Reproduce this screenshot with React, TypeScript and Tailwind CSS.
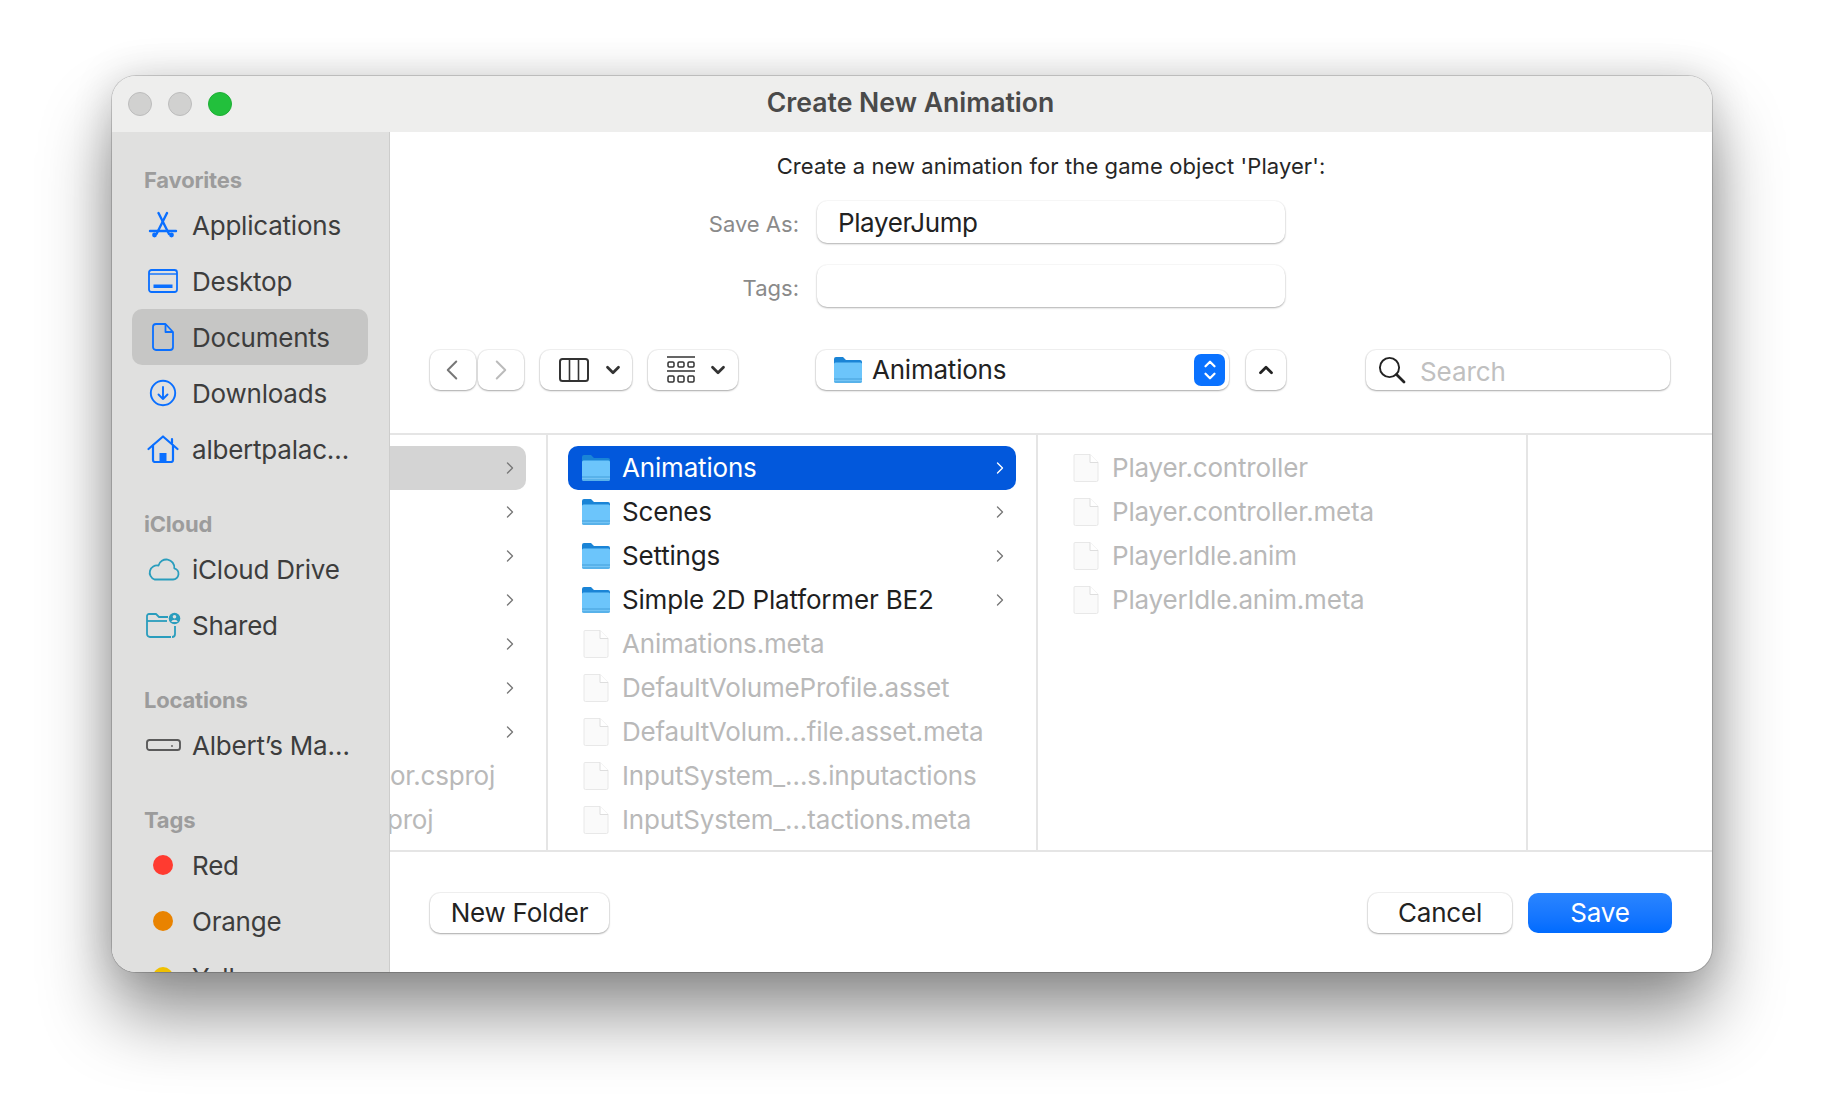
import React from 'react';
import { ChevronLeft, ChevronRight, ChevronDown, ChevronUp } from 'lucide-react';

const BLUE = '#0a6fff';
const TEAL = '#2a9dbd';

const AppsIcon = () => (
  <svg width="30" height="28" viewBox="0 0 30 28" fill="none" stroke={BLUE} strokeWidth="2.4" strokeLinecap="round">
    <path d="M10.5 2 L21 23" />
    <path d="M19 2 L8.5 23" />
    <path d="M2 20 H28" />
    <circle cx="6.5" cy="24" r="1.2" fill={BLUE} />
    <circle cx="23.5" cy="24" r="1.2" fill={BLUE} />
  </svg>
);

const DesktopIcon = () => (
  <svg width="30" height="24" viewBox="0 0 30 24" fill="none" stroke={BLUE} strokeWidth="1.8">
    <rect x="1" y="1" width="28" height="22" rx="2.5" />
    <path d="M1 5 H29" strokeWidth="1.4" />
    <rect x="5.5" y="15.5" width="19" height="3.5" fill={BLUE} stroke="none" />
  </svg>
);

const DocIcon = () => (
  <svg width="22" height="28" viewBox="0 0 22 28" fill="none" stroke={BLUE} strokeWidth="1.8" strokeLinejoin="round">
    <path d="M4 1 H13.5 L21 9 V24 A3 3 0 0 1 18 27 H4 A3 3 0 0 1 1 24 V4 A3 3 0 0 1 4 1 Z" />
    <path d="M13.5 1 V9 H21" />
  </svg>
);

const DownloadIcon = () => (
  <svg width="28" height="28" viewBox="0 0 28 28" fill="none" stroke={BLUE} strokeWidth="1.9" strokeLinecap="round" strokeLinejoin="round">
    <circle cx="14" cy="14" r="12.2" />
    <path d="M14 8 V20 M9.5 15.5 L14 20 L18.5 15.5" />
  </svg>
);

const HomeIcon = () => (
  <svg width="32" height="28" viewBox="0 0 32 28" fill="none" stroke={BLUE} strokeWidth="2.2" strokeLinecap="round" strokeLinejoin="round">
    <path d="M1.5 14 L16 1.5 L30.5 14" />
    <path d="M6 10.5 V25 A2 2 0 0 0 8 27 H24 A2 2 0 0 0 26 25 V10.5" />
    <path d="M25 4 V8" />
    <rect x="12.5" y="18" width="7" height="9" fill={BLUE} stroke="none" />
  </svg>
);

const CloudIcon = () => (
  <svg width="33" height="24" viewBox="0 0 33 24" fill="none" stroke={TEAL} strokeWidth="1.8" strokeLinejoin="round">
    <path d="M7.5 22.5 H26 A5.7 5.7 0 0 0 27.3 11.3 A8.05 8.05 0 0 0 11.5 8.5 A7.3 7.3 0 0 0 7.5 22.5 Z" />
  </svg>
);

const SharedIcon = () => (
  <svg width="35" height="26" viewBox="0 0 35 26" fill="none" stroke={TEAL} strokeWidth="1.8" strokeLinejoin="round">
    <path d="M25 25 H4 A3 3 0 0 1 1 22 V4 A2 2 0 0 1 3 2 H10 L13 5 H22" />
    <path d="M1 9 H21" />
    <path d="M29 14 V22 A3 3 0 0 1 26 25" />
    <circle cx="28.5" cy="6.5" r="5.8" fill={TEAL} stroke="none" />
    <circle cx="28.5" cy="4.8" r="1.8" fill="#e0e0df" stroke="none" />
    <path d="M25.2 10 A3.4 3 0 0 1 31.8 10 Z" fill="#e0e0df" stroke="none" />
  </svg>
);

const DriveIcon = () => (
  <svg width="35" height="14" viewBox="0 0 35 14" fill="none" stroke="#5b5b5b" strokeWidth="1.9">
    <rect x="1" y="2" width="33" height="10" rx="2.6" />
    <circle cx="26" cy="8" r="0.9" fill="#5b5b5b" stroke="none" />
  </svg>
);

const FolderIcon = () => (
  <svg width="30" height="28" viewBox="0 0 30 28" className="shrink-0">
    <path d="M1 3 A2 2 0 0 1 3 1 H10 L13 4 H27 A2 2 0 0 1 29 6 V14 H1 Z" fill="#1a84d6" />
    <path d="M1 8 A1.5 1.5 0 0 1 2.5 6.5 H27.5 A1.5 1.5 0 0 1 29 8 V25 A2 2 0 0 1 27 27 H3 A2 2 0 0 1 1 25 Z" fill="#6cc5fb" />
    <path d="M1 22 H29 V25 A2 2 0 0 1 27 27 H3 A2 2 0 0 1 1 25 Z" fill="#58b2ea" />
    <path d="M1 24.5 H29" stroke="#7cc9f6" strokeWidth="0.8" />
  </svg>
);

const FileIcon = () => (
  <svg width="28" height="30" viewBox="0 0 28 30" className="shrink-0">
    <path d="M3 1.5 H18 L26 9.5 V27 A1.5 1.5 0 0 1 24.5 28.5 H3.5 A1.5 1.5 0 0 1 2 27 V2.5 A1 1 0 0 1 3 1.5 Z" fill="#fafafa" stroke="#e8e8e8" strokeWidth="1" />
    <path d="M18 1.5 V9.5 H26" fill="#ffffff" stroke="#dedede" strokeWidth="1" />
  </svg>
);

const ColumnsIcon = () => (
  <svg width="30" height="24" viewBox="0 0 30 24" fill="none" stroke="#333" strokeWidth="2">
    <rect x="1" y="1" width="28" height="22" rx="2.5" />
    <path d="M10.5 1 V23 M19.5 1 V23" strokeWidth="1.6" />
  </svg>
);

const GroupIcon = () => (
  <svg width="28" height="28" viewBox="0 0 28 28" fill="none" stroke="#333" strokeWidth="1.5">
    <path d="M0 1 H28 M0 15 H28" />
    <rect x="1" y="6" width="6" height="5" rx="1.2" />
    <rect x="11" y="6" width="6" height="5" rx="1.2" />
    <rect x="21" y="6" width="6" height="5" rx="1.2" />
    <rect x="1" y="20" width="6" height="6" rx="1.2" />
    <rect x="11" y="20" width="6" height="6" rx="1.2" />
    <rect x="21" y="20" width="6" height="6" rx="1.2" />
  </svg>
);

const SearchIcon = () => (
  <svg width="28" height="28" viewBox="0 0 28 28" fill="none" stroke="#222" className="shrink-0">
    <circle cx="11.5" cy="11.5" r="9.6" strokeWidth="1.9" />
    <path d="M18.5 18.5 L26 26" strokeWidth="2.8" strokeLinecap="round" />
  </svg>
);

const Label: React.FC<{ children: React.ReactNode; first?: boolean }> = ({ children, first }) => (
  <div className={`h-[28px] leading-[28px] pl-[32px] mb-[3px] text-[22px] font-bold tracking-[-0.2px] text-[#9c9c9c] ${first ? '' : 'mt-[33px]'}`}>
    {children}
  </div>
);

const SideItem: React.FC<{ icon: React.ReactNode; text: string; active?: boolean }> = ({ icon, text, active }) => (
  <div className={`ml-[20px] w-[236px] h-[56px] shrink-0 flex items-center pl-[13px] rounded-[10px] ${active ? 'bg-[#c6c6c5]' : ''}`}>
    <div className="w-[36px] flex justify-center shrink-0">{icon}</div>
    <span className="ml-[11px] text-[26px] tracking-[-0.22px] text-[#3d3d3d] whitespace-nowrap">{text}</span>
  </div>
);

const Dot: React.FC<{ color: string }> = ({ color }) => <div className={`w-[20px] h-[20px] rounded-full ${color}`} />;

const Row: React.FC<{ name?: string; folder?: boolean; selected?: boolean }> = ({ name, folder, selected }) => (
  <div className={`h-[44px] shrink-0 w-[448px] ml-[20px] flex items-center pr-[6px] rounded-[10px] ${folder ? 'pl-[13px]' : 'pl-[14px]'} ${selected ? 'bg-[#0258dc]' : ''}`}>
    {folder ? <FolderIcon /> : <FileIcon />}
    <span className={`pb-[2px] text-[26px] tracking-[-0.18px] whitespace-nowrap ${folder ? 'ml-[11px]' : 'ml-[12px]'} ${selected ? 'text-white' : folder ? 'text-[#1f1f1f]' : 'text-[#b9b9b9]'}`}>{name}</span>
    {folder && <ChevronRight size={20} strokeWidth={1.6} className={`ml-auto ${selected ? 'text-white' : 'text-[#777]'}`} />}
  </div>
);

const btn = 'bg-white rounded-[10px] shadow-[0_0_0_1px_rgba(0,0,0,0.05),0_1px_2px_rgba(0,0,0,0.3)]';
const field = 'bg-white rounded-[10px] shadow-[0_0_0_1px_rgba(0,0,0,0.02),0_1px_2px_rgba(0,0,0,0.3)]';

export default function App() {
  const col2 = [
    { name: 'Animations', folder: true, selected: true },
    { name: 'Scenes', folder: true },
    { name: 'Settings', folder: true },
    { name: 'Simple 2D Platformer BE2', folder: true },
    { name: 'Animations.meta' },
    { name: 'DefaultVolumeProfile.asset' },
    { name: 'DefaultVolum…file.asset.meta' },
    { name: 'InputSystem_…s.inputactions' },
    { name: 'InputSystem_…tactions.meta' },
    {},
  ];
  const col3 = ['Player.controller', 'Player.controller.meta', 'PlayerIdle.anim', 'PlayerIdle.anim.meta'];

  return (
    <div className="w-[1824px] h-[1120px] bg-white pt-[76px] pl-[112px] overflow-hidden font-['Inter',sans-serif]">
      <div className="w-[1600px] h-[896px] rounded-[24px] overflow-hidden flex flex-col bg-white shadow-[0_0_0_1px_rgba(0,0,0,0.16),0_44px_70px_rgba(0,0,0,0.42),0_0_40px_rgba(0,0,0,0.16)]">
        {/* title bar */}
        <div className="h-[56px] shrink-0 bg-[#eeeeed] flex items-center relative">
          <div className="flex gap-[16px] pl-[16px]">
            <div className="w-[24px] h-[24px] rounded-full bg-[#d1d1d0] border border-[#bcbcbc]" />
            <div className="w-[24px] h-[24px] rounded-full bg-[#d1d1d0] border border-[#bcbcbc]" />
            <div className="w-[24px] h-[24px] rounded-full bg-[#22c03c] border border-[#1eae35]" />
          </div>
          <div className="absolute inset-0 flex items-center justify-center pb-[2px] pr-[3px] text-[26.6px] font-semibold text-[#4a4a4a]">Create New Animation</div>
        </div>

        <div className="flex flex-1 min-h-0">
          {/* sidebar */}
          <div className="w-[278px] shrink-0 bg-[#e0e0df] border-r border-[#cdcdcc] pt-[34px] overflow-hidden flex flex-col">
            <Label first>Favorites</Label>
            <SideItem icon={<AppsIcon />} text="Applications" />
            <SideItem icon={<DesktopIcon />} text="Desktop" />
            <SideItem icon={<DocIcon />} text="Documents" active />
            <SideItem icon={<DownloadIcon />} text="Downloads" />
            <SideItem icon={<HomeIcon />} text="albertpalac…" />
            <Label>iCloud</Label>
            <SideItem icon={<CloudIcon />} text="iCloud Drive" />
            <SideItem icon={<SharedIcon />} text="Shared" />
            <Label>Locations</Label>
            <SideItem icon={<DriveIcon />} text="Albert’s Ma…" />
            <Label>Tags</Label>
            <SideItem icon={<Dot color="bg-[#ff3b30]" />} text="Red" />
            <SideItem icon={<Dot color="bg-[#e98300]" />} text="Orange" />
            <SideItem icon={<Dot color="bg-[#f0c000]" />} text="Yellow" />
          </div>

          {/* main */}
          <div className="flex-1 min-w-0 flex flex-col">
            <div className="h-[303px] shrink-0 border-b-2 border-[#e5e5e5]">
              <div className="mt-[20px] h-[28px] leading-[28px] text-center text-[22px] tracking-[0.09px] text-[#262626]">
                Create a new animation for the game object 'Player':
              </div>
              <div className="mt-[21px] flex items-center h-[42px]">
                <div className="w-[409px] pt-[5px] text-right text-[22px] text-[#8a8a8a]">Save As:</div>
                <div className={`ml-[18px] w-[468px] h-[42px] flex items-center pl-[21px] text-[26px] tracking-[-0.4px] text-[#222] ${field}`}>PlayerJump</div>
              </div>
              <div className="mt-[22px] flex items-center h-[42px]">
                <div className="w-[409px] pt-[5px] text-right text-[22px] text-[#8a8a8a]">Tags:</div>
                <div className={`ml-[18px] w-[468px] h-[42px] ${field}`} />
              </div>
              <div className="mt-[43px] flex h-[40px] pl-[40px]">
                <div className={`w-[46px] flex items-center justify-center ${btn}`}>
                  <ChevronLeft size={34} strokeWidth={1.4} className="text-[#777] -ml-[3px]" />
                </div>
                <div className={`w-[46px] ml-[2px] flex items-center justify-center ${btn}`}>
                  <ChevronRight size={34} strokeWidth={1.4} className="text-[#bbb]" />
                </div>
                <div className={`w-[92px] ml-[16px] flex items-center pl-[19px] ${btn}`}>
                  <ColumnsIcon />
                  <ChevronDown size={22} strokeWidth={3} className="ml-[13px] text-[#333]" />
                </div>
                <div className={`w-[90px] ml-[16px] flex items-center pl-[19px] ${btn}`}>
                  <GroupIcon />
                  <ChevronDown size={22} strokeWidth={3} className="ml-[12px] text-[#333]" />
                </div>
                <div className={`w-[413px] ml-[78px] flex items-center pl-[17px] pr-[4px] ${btn}`}>
                  <FolderIcon />
                  <span className="ml-[9px] pb-[2px] text-[26px] tracking-[-0.22px] text-[#222]">Animations</span>
                  <div className="ml-auto w-[31px] h-[32px] rounded-[7px] bg-[#0a72ff] flex flex-col items-center justify-center text-white">
                    <ChevronUp size={18} strokeWidth={3} className="-mb-[3px]" />
                    <ChevronDown size={18} strokeWidth={3} className="-mt-[3px]" />
                  </div>
                </div>
                <div className={`w-[40px] ml-[17px] flex items-center justify-center ${btn}`}>
                  <ChevronUp size={22} strokeWidth={3} className="text-[#222] -ml-[1px]" />
                </div>
                <div className={`w-[304px] ml-[80px] flex items-center pl-[12px] ${btn}`}>
                  <SearchIcon />
                  <span className="ml-[19px] pt-[2px] text-[26px] tracking-[-0.1px] text-[#c0c0c0] -translate-x-[5px]">Search</span>
                </div>
              </div>
            </div>

            {/* column browser */}
            <div className="h-[417px] shrink-0 flex border-b-2 border-[#e5e5e5] overflow-hidden">
              <div className="w-[158px] shrink-0 border-r-2 border-[#e5e5e5] pt-[11px] flex flex-col">
                {[0, 1, 2, 3, 4, 5, 6].map((i) => (
                  <div key={i} className={`h-[44px] shrink-0 mr-[20px] flex items-center justify-end pr-[6px] rounded-r-[10px] ${i === 0 ? 'bg-[#d4d4d4]' : ''}`}>
                    <ChevronRight size={20} strokeWidth={1.6} className="text-[#777]" />
                  </div>
                ))}
                <div className="h-[44px] shrink-0 flex items-center text-[26px] tracking-[-0.22px] text-[#b9b9b9] overflow-hidden whitespace-nowrap">
                  <span className="pb-[2px]">or.csproj</span>
                </div>
                <div className="h-[44px] shrink-0 flex items-center text-[26px] tracking-[-0.22px] text-[#b9b9b9] overflow-hidden whitespace-nowrap">
                  <span className="pb-[2px] -ml-[3px]">proj</span>
                </div>
              </div>
              <div className="w-[490px] shrink-0 border-r-2 border-[#e5e5e5] pt-[11px] flex flex-col">
                {col2.map((r, i) => (
                  <Row key={i} {...r} />
                ))}
              </div>
              <div className="w-[490px] shrink-0 border-r-2 border-[#e5e5e5] pt-[11px] flex flex-col">
                {col3.map((n) => (
                  <Row key={n} name={n} />
                ))}
              </div>
              <div className="flex-1" />
            </div>

            {/* footer */}
            <div className="flex-1 flex items-start pt-[41px] px-[40px]">
              <div className={`w-[179px] h-[40px] flex items-center justify-center pb-[2px] text-[26px] tracking-[-0.22px] text-[#222] ${btn}`}>New Folder</div>
              <div className={`ml-auto w-[144px] h-[40px] flex items-center justify-center pb-[2px] text-[26px] tracking-[-0.22px] text-[#222] ${btn}`}>Cancel</div>
              <div className="ml-[16px] w-[144px] h-[40px] flex items-center justify-center pb-[2px] text-[26px] tracking-[-0.22px] text-white rounded-[10px] bg-gradient-to-b from-[#2a85ff] to-[#006bff]">Save</div>
            </div>
          </div>
        </div>
      </div>
    </div>
  );
}
